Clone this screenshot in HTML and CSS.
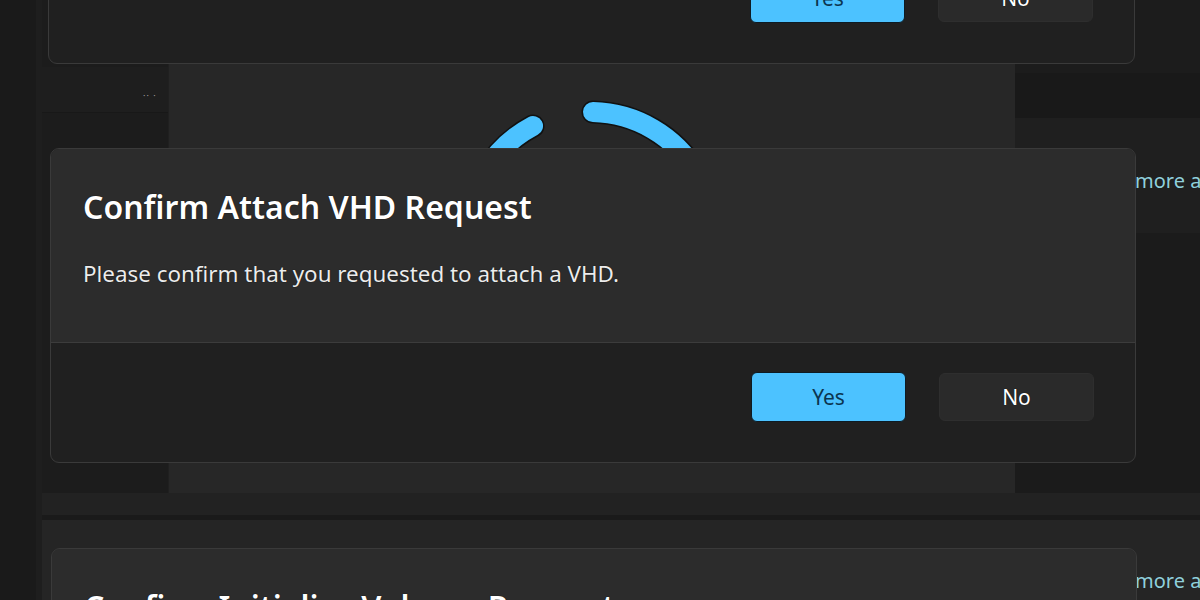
FILE: index.html
```html
<!DOCTYPE html>
<html lang="en">
<head>
<meta charset="utf-8">
<title>Confirm Attach VHD Request</title>
<link rel="stylesheet" href="styles.css">
</head>
<body>
<div class="desk">
  <div class="backwin"></div>
  <div class="band band-top-left"><span class="dots">·· ·</span></div>
  <div class="band band-top-right"></div>
  <div class="band band-right-mid"></div>
  <div class="band band-right-low"></div>
  <div class="band band-bottom"></div>
  <div class="band band-bottom-win"></div>

  <a class="link link-1">more about</a>
  <a class="link link-2">more about</a>

  <div class="progress-win">
    <svg class="spinner" width="847" height="430" viewBox="0 0 847 430" aria-hidden="true">
      <g fill="none" stroke-linecap="round">
        <path d="M424 49 A124 124 0 0 1 528 110" stroke="#111" stroke-width="23"/>
        <path d="M364 63 A124 124 0 0 0 315 110" stroke="#111" stroke-width="23"/>
        <path d="M424 49 A124 124 0 0 1 528 110" stroke="#4cc2ff" stroke-width="20"/>
        <path d="M364 63 A124 124 0 0 0 315 110" stroke="#4cc2ff" stroke-width="20"/>
      </g>
    </svg>
  </div>

  <div class="dialog dialog-top">
    <div class="dialog-body">
      <div class="dialog-title">Confirm Request</div>
    </div>
    <div class="dialog-footer">
      <button class="btn btn-primary">Yes</button>
      <button class="btn btn-secondary">No</button>
    </div>
  </div>

  <div class="dialog dialog-main">
    <div class="dialog-body">
      <div class="dialog-title">Confirm Attach VHD Request</div>
      <div class="dialog-text">Please confirm that you requested to attach a VHD.</div>
    </div>
    <div class="dialog-footer">
      <button class="btn btn-primary">Yes</button>
      <button class="btn btn-secondary">No</button>
    </div>
  </div>

  <div class="dialog dialog-bottom">
    <div class="dialog-body">
      <div class="dialog-title">Confirm Initialize Volume Request</div>
    </div>
  </div>
</div>
</body>
</html>
```
FILE: styles.css
```css
* { box-sizing: border-box; }

html, body {
  margin: 0;
  padding: 0;
  background: #1a1a1a;
}

body {
  font-family: "Noto Sans", "Open Sans", "Liberation Sans", sans-serif;
}

.desk {
  position: relative;
  width: 1200px;
  height: 600px;
  overflow: hidden;
  background: #1a1a1a;
}

/* underlying app window */
.backwin {
  position: absolute;
  left: 36px;
  top: 0;
  width: 1164px;
  height: 600px;
  background: #1c1c1c;
  border-left: 6px solid #1e1e1e;
}

.band {
  position: absolute;
}

.band-top-left {
  left: 42px;
  top: 67px;
  width: 126px;
  height: 46px;
  background: #1e1e1e;
  border-bottom: 1px solid #181818;
}

.dots {
  position: absolute;
  left: 101px;
  top: 24px;
  font-size: 9px;
  line-height: 9px;
  color: #9a9a9a;
  letter-spacing: 1px;
}

.band-top-right {
  left: 1015px;
  top: 73px;
  width: 185px;
  height: 45px;
  background: #191919;
}

.band-right-mid {
  left: 1015px;
  top: 118px;
  width: 185px;
  height: 115px;
  background: #1f1f1f;
}

.band-right-low {
  left: 1015px;
  top: 233px;
  width: 185px;
  height: 260px;
  background: #1b1b1b;
}

.band-bottom {
  left: 42px;
  top: 493px;
  width: 1158px;
  height: 27px;
  background: #222222;
  border-bottom: 5px solid #1a1a1a;
}

.band-bottom-win {
  left: 42px;
  top: 520px;
  width: 1158px;
  height: 80px;
  background: #252525;
}

.link {
  position: absolute;
  left: 1135px;
  font-size: 20px;
  line-height: 26px;
  color: #8fd0dc;
  white-space: nowrap;
  text-decoration: none;
}

.link-1 { top: 168px; }
.link-2 { top: 568px; }

.progress-win {
  position: absolute;
  left: 168px;
  top: 63px;
  width: 847px;
  height: 430px;
  background: #272727;
  border-left: 1px solid #202020;
}

.spinner {
  display: block;
}

/* content dialogs */
.dialog {
  position: absolute;
  display: flex;
  flex-direction: column;
  background: #202020;
  border: 1px solid #3a3a3a;
  border-radius: 9px;
  overflow: hidden;
}

.dialog-top {
  left: 48px;
  top: -251px;
  width: 1087px;
  height: 315px;
}

.dialog-main {
  left: 50px;
  top: 148px;
  width: 1086px;
  height: 315px;
}

.dialog-bottom {
  left: 51px;
  top: 548px;
  width: 1086px;
  height: 315px;
  background: #2d2d2d;
}

.dialog-body {
  height: 194px;
  flex: none;
  padding: 38px 33px 0 32px;
  background: #2c2c2c;
  border-bottom: 1px solid #3c3c3c;
}

.dialog-title {
  font-size: 32px;
  line-height: 40px;
  font-weight: 600;
  color: #ffffff;
  white-space: nowrap;
  text-shadow: 0 0 1px #000;
}

.dialog-text {
  margin-top: 33px;
  font-size: 22.4px;
  line-height: 28px;
  color: #ececec;
  white-space: nowrap;
  text-shadow: 0 0 1px #000;
}

.dialog-footer {
  flex: 1;
  display: flex;
  justify-content: flex-end;
  align-items: flex-start;
  gap: 33px;
  padding: 29px 41px 0 0;
}

.btn {
  width: 155px;
  height: 50px;
  border-radius: 6px;
  font-family: inherit;
  font-size: 21px;
  line-height: 1;
  cursor: pointer;
}

.btn-primary {
  background: #4cc2ff;
  color: #0b3550;
  border: 1px solid #0d1b24;
}

.btn-secondary {
  background: #2a2a2a;
  color: #ffffff;
  border: 1px solid #2e2e2e;
  height: 48px;
  margin-top: 1px;
  text-shadow: 0 0 1px #000;
}
```
